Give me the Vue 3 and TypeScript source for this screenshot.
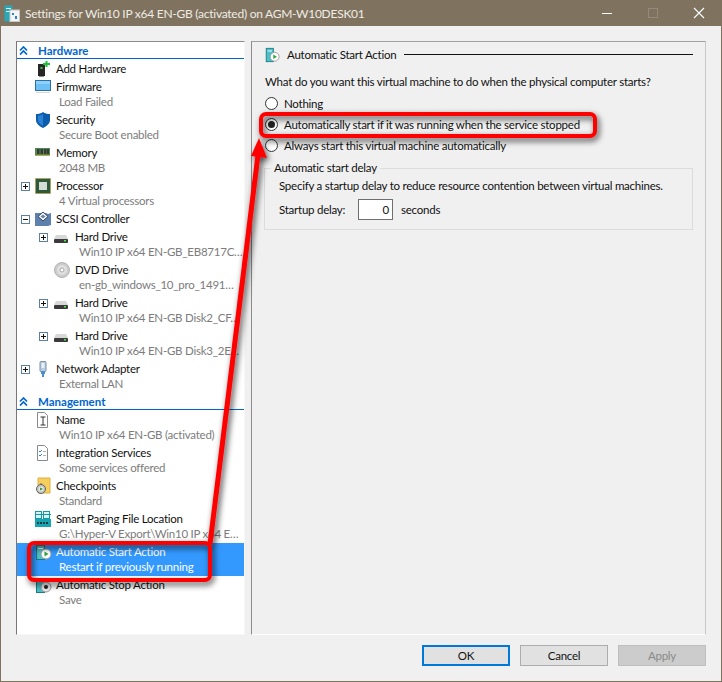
<script setup lang="ts">
interface Row {
  icon: string
  title: string
  sub?: string
  nested?: boolean
  toggle?: '+' | '−'
  selected?: boolean
}

const hardware: Row[] = [
  { icon: 'add', title: 'Add Hardware' },
  { icon: 'firmware', title: 'Firmware', sub: 'Load Failed' },
  { icon: 'security', title: 'Security', sub: 'Secure Boot enabled' },
  { icon: 'memory', title: 'Memory', sub: '2048 MB' },
  { icon: 'cpu', title: 'Processor', sub: '4 Virtual processors', toggle: '+' },
  { icon: 'scsi', title: 'SCSI Controller', toggle: '−' },
  { icon: 'disk', title: 'Hard Drive', sub: 'Win10 IP x64 EN-GB_EB8717C…', nested: true, toggle: '+' },
  { icon: 'dvd', title: 'DVD Drive', sub: 'en-gb_windows_10_pro_1491…', nested: true },
  { icon: 'disk', title: 'Hard Drive', sub: 'Win10 IP x64 EN-GB Disk2_CF…', nested: true, toggle: '+' },
  { icon: 'disk', title: 'Hard Drive', sub: 'Win10 IP x64 EN-GB Disk3_2E…', nested: true, toggle: '+' },
  { icon: 'net', title: 'Network Adapter', sub: 'External LAN', toggle: '+' },
]

const management: Row[] = [
  { icon: 'name', title: 'Name', sub: 'Win10 IP x64 EN-GB (activated)' },
  { icon: 'services', title: 'Integration Services', sub: 'Some services offered' },
  { icon: 'checkpoint', title: 'Checkpoints', sub: 'Standard' },
  { icon: 'paging', title: 'Smart Paging File Location', sub: 'G:\\Hyper-V Export\\Win10 IP x64 E…' },
  { icon: 'start', title: 'Automatic Start Action', sub: 'Restart if previously running', selected: true },
  { icon: 'stop', title: 'Automatic Stop Action', sub: 'Save' },
]

const sections = [
  { name: 'Hardware', rows: hardware },
  { name: 'Management', rows: management },
]

const choices = [
  { label: 'Nothing', checked: false },
  { label: 'Automatically start if it was running when the service stopped', checked: true },
  { label: 'Always start this virtual machine automatically', checked: false },
]
</script>

<template>
  <div class="screen">
    <div class="window">
      <header class="titlebar">
        <svg class="title-icon" width="16" height="17" viewBox="0 0 16 17">
          <rect x="0.5" y="0.5" width="8" height="16" fill="#2aa6b4" />
          <rect x="2" y="3" width="5" height="1" fill="#d8f0f2" />
          <rect x="2" y="6" width="5" height="1" fill="#d8f0f2" />
          <rect x="6" y="5" width="9.5" height="11.5" fill="#f4f4f4" stroke="#c8c8c8" />
          <rect x="8" y="8" width="2" height="2" fill="#2f7fd0" />
          <rect x="11" y="11" width="2" height="3" fill="#2f7fd0" />
        </svg>
        <span class="title-text">Settings for Win10 IP x64 EN-GB (activated) on AGM-W10DESK01</span>
        <div class="controls">
          <svg width="12" height="12" viewBox="0 0 12 12"><rect x="1" y="6" width="10" height="1" fill="#fff" /></svg>
          <svg width="12" height="12" viewBox="0 0 12 12"><rect x="1.5" y="1.5" width="9" height="9" fill="none" stroke="#94897a" /></svg>
          <svg width="12" height="12" viewBox="0 0 12 12"><path d="M1 1l10 10M11 1L1 11" stroke="#fff" stroke-width="1.1" fill="none" /></svg>
        </div>
      </header>

      <div class="body">
        <div class="main">
          <nav class="tree">
            <section v-for="section in sections" :key="section.name">
              <h2 class="section-head">
                <svg width="9" height="9" viewBox="0 0 9 9">
                  <path d="M1 4.5l3.5-3.5L8 4.5M1 8.5L4.5 5 8 8.5" fill="none" stroke="#0066cc" stroke-width="1.7" />
                </svg>
                <span>{{ section.name }}</span>
              </h2>
              <div
                v-for="(row, i) in section.rows"
                :key="i"
                class="row"
                :class="{ nested: row.nested, selected: row.selected, 'has-sub': row.sub }"
              >
                <span class="toggle-cell">
                  <span v-if="row.toggle" class="toggle">
                    <svg width="9" height="9" viewBox="0 0 9 9">
                      <rect x="0.5" y="0.5" width="8" height="8" fill="#fff" stroke="#5f7f9f" />
                      <rect x="2" y="4" width="5" height="1" fill="#111" />
                      <rect v-if="row.toggle === '+'" x="4" y="2" width="1" height="5" fill="#111" />
                    </svg>
                  </span>
                </span>
                <svg class="icon" width="18" height="18" viewBox="0 0 18 18">
                  <template v-if="row.icon === 'add'">
                    <path d="M4 4h7v12H4z" fill="#262626" />
                    <rect x="5" y="16" width="5" height="1" fill="#888" />
                    <rect x="6.500" y="7" width="2" height="2" fill="#3fc04a" />
                    <path d="M11.500 1h2v2h2.500v2h-2.500v2h-2V5H9V3h2.500z" fill="#1fbf3a" />
                  </template>
                  <template v-else-if="row.icon === 'firmware'">
                    <rect x="1.500" y="2.500" width="15" height="10" fill="#6cc0f4" stroke="#2a6fa8" />
                    <rect x="2" y="3" width="14" height="3" fill="#8ed2fa" />
                    <rect x="2" y="14" width="14" height="1" fill="#d8d8d8" />
                  </template>
                  <template v-else-if="row.icon === 'security'">
                    <path d="M9 1c2 1.500 4 2 7 2v6c0 3.500-3 6-7 8-4-2-7-4.500-7-8V3c3 0 5-.5 7-2z" fill="#0a5cad" />
                    <path d="M9 3c-1.500 1-3 1.500-5 1.700V9c0 2.500 2 4.300 5 6z" fill="#2a82d4" />
                  </template>
                  <template v-else-if="row.icon === 'memory'">
                    <rect x="1" y="4" width="15" height="8" fill="#4c8a55" />
                    <rect x="3" y="5" width="2.500" height="5" fill="#3a3a32" />
                    <rect x="6.500" y="5" width="2.500" height="5" fill="#3a3a32" />
                    <rect x="10" y="5" width="2.500" height="5" fill="#3a3a32" />
                    <rect x="13" y="5" width="2" height="5" fill="#3a3a32" />
                    <rect x="1" y="11" width="15" height="1" fill="#b9a64f" />
                  </template>
                  <template v-else-if="row.icon === 'cpu'">
                    <rect x="1.500" y="1.500" width="15" height="15" fill="#2f5a3a" stroke="#b89a3a" stroke-dasharray="1 1" />
                    <rect x="2.500" y="2.500" width="13" height="13" fill="#2f5a3a" />
                    <rect x="5" y="5" width="8" height="8" fill="#d4dcd6" />
                  </template>
                  <template v-else-if="row.icon === 'scsi'">
                    <path d="M1 3h11l2 1 3-1v12l-3 1H1z" fill="#5d80ad" />
                    <path d="M9 2l5 4.500L9 11 4 6.500z" fill="#f1f4f8" stroke="#30445f" />
                    <path d="M9 4.500L11.500 6.500 9 8.500 6.500 6.500z" fill="#6e86a6" />
                  </template>
                  <template v-else-if="row.icon === 'disk'">
                    <path d="M4 7h10l2 4H2z" fill="#d8d8d8" />
                    <rect x="2" y="11" width="14" height="4" rx="1" fill="#3a3a3a" />
                    <rect x="12" y="12" width="2" height="1.500" fill="#52e052" />
                  </template>
                  <template v-else-if="row.icon === 'dvd'">
                    <circle cx="10" cy="9" r="7.500" fill="#cbcbcb" stroke="#b4b4b4" />
                    <circle cx="10" cy="9" r="5" fill="#e0e0e0" />
                    <circle cx="10" cy="9" r="2" fill="#fff" stroke="#a8a8a8" />
                  </template>
                  <template v-else-if="row.icon === 'net'">
                    <rect x="6" y="1.500" width="6" height="10" rx="1" fill="#b9cde0" stroke="#7a8ea5" />
                    <rect x="7.500" y="3" width="3" height="5" fill="#e8f0f6" />
                    <rect x="7" y="11" width="4" height="3" fill="#4f8fc8" />
                    <rect x="8" y="14" width="2" height="3" fill="#4a90d9" />
                  </template>
                  <template v-else-if="row.icon === 'name'">
                    <path d="M3.500 1.500h7l3 3v12h-10z" fill="#fff" stroke="#8a8a8a" />
                    <path d="M6.500 6h5M6.500 14h5M9 6v8" fill="none" stroke="#333" />
                  </template>
                  <template v-else-if="row.icon === 'services'">
                    <path d="M3.500 1.500h7l3 3v12h-10z" fill="#fff" stroke="#8a8a8a" />
                    <path d="M5 7l1 1 2-2M5 11l1 1 2-2" fill="none" stroke="#2f7fd0" />
                    <path d="M9 7.500h3M9 11.500h3" stroke="#b0b0b0" />
                  </template>
                  <template v-else-if="row.icon === 'checkpoint'">
                    <path d="M4 1h8l4 0v15H4z" fill="#f4cf5f" stroke="#e0b040" />
                    <circle cx="7" cy="12" r="4.500" fill="#c4c4c4" stroke="#666" />
                    <circle cx="7" cy="12" r="2.500" fill="#e8e8e8" />
                    <path d="M6 10.500l3 1.500-3 1.500z" fill="#2f9a3a" />
                    <rect x="6" y="6.500" width="2" height="1" fill="#666" />
                  </template>
                  <template v-else-if="row.icon === 'paging'">
                    <rect x="1.500" y="1.500" width="6" height="7" fill="#d8f2f4" stroke="#129aa6" />
                    <rect x="9.500" y="1.500" width="6" height="7" fill="#d8f2f4" stroke="#129aa6" />
                    <rect x="1" y="4" width="16" height="1" fill="#129aa6" />
                    <rect x="1" y="9" width="16" height="8" fill="#15a4b0" />
                    <path d="M3 12h2v2H3zM6 12h2v2H6zM9 12h2v2H9zM12 12h2v2h-2z" fill="#063e46" />
                  </template>
                  <template v-else-if="row.icon === 'start'">
                    <rect x="2.500" y="2.500" width="8" height="14" fill="#4ec0c8" stroke="#1a7c86" />
                    <rect x="4" y="5" width="5" height="1" fill="#fff" />
                    <circle cx="12" cy="11" r="5" fill="#fff" stroke="#9a9a9a" />
                    <path d="M10.500 8.500l4 2.500-4 2.500z" fill="#2aa83a" />
                  </template>
                  <template v-else-if="row.icon === 'stop'">
                    <rect x="2.500" y="2.500" width="8" height="14" fill="#4ec0c8" stroke="#1a7c86" />
                    <rect x="4" y="5" width="5" height="1" fill="#fff" />
                    <circle cx="12" cy="11" r="5" fill="#eee" stroke="#9a9a9a" />
                    <circle cx="12" cy="11" r="2" fill="#222" />
                  </template>
                </svg>
                <span class="row-title">{{ row.title }}</span>
                <span v-if="row.sub" class="row-sub">{{ row.sub }}</span>
              </div>
            </section>
          </nav>

          <section class="panel">
            <div class="panel-head">
              <svg width="16" height="16" viewBox="0 0 18 18">
                <rect x="2.500" y="1.500" width="8" height="15" fill="#4ec0c8" stroke="#1a7c86" />
                <rect x="4" y="4" width="5" height="1" fill="#fff" />
                <circle cx="12" cy="11" r="5" fill="#fff" stroke="#9a9a9a" />
                <path d="M10.500 8.500l4 2.500-4 2.500z" fill="#2aa83a" />
              </svg>
              <span class="panel-title">Automatic Start Action</span>
              <span class="panel-rule"></span>
            </div>
            <p class="question">What do you want this virtual machine to do when the physical computer starts?</p>
            <div class="choices">
              <label v-for="choice in choices" :key="choice.label" class="choice">
                <span class="radio" :class="{ checked: choice.checked }"></span>
                <span>{{ choice.label }}</span>
              </label>
            </div>
            <fieldset class="delay">
              <legend>Automatic start delay</legend>
              <p class="delay-text">Specify a startup delay to reduce resource contention between virtual machines.</p>
              <div class="delay-row">
                <span>Startup delay:</span>
                <span class="delay-input">0</span>
                <span>seconds</span>
              </div>
            </fieldset>
          </section>
        </div>

        <footer class="footer">
          <button class="btn primary" type="button">OK</button>
          <button class="btn" type="button">Cancel</button>
          <button class="btn disabled" type="button">Apply</button>
        </footer>
      </div>
    </div>

    <svg class="annotations" width="722" height="682" viewBox="0 0 722 682">
      <defs>
        <filter id="shade" x="-20%" y="-20%" width="140%" height="140%">
          <feDropShadow dx="2" dy="3" stdDeviation="3" flood-color="#000" flood-opacity="0.75" />
        </filter>
      </defs>
      <g filter="url(#shade)" fill="none" stroke="#ff0000">
        <rect x="29" y="543" width="181" height="37" rx="5" stroke-width="4" />
        <rect x="261" y="114" width="334" height="22" rx="5" stroke-width="4" />
        <path d="M210 544L258 155" stroke-width="5" />
        <path d="M259 138L267 158 251 156z" fill="#ff0000" stroke="none" />
      </g>
    </svg>
  </div>
</template>

<style>
html,
body {
  margin: 0;
  background: #f0f0f0;
}
</style>

<style scoped>
.screen {
  position: relative;
  width: 722px;
  height: 682px;
  overflow: hidden;
  font-family: Lato, "Open Sans", sans-serif;
  font-size: 11.5px;
  letter-spacing: -0.24px;
  color: #111;
}
.window {
  box-sizing: border-box;
  height: 682px;
  display: flex;
  flex-direction: column;
  background: #f0f0f0;
  border: 1px solid #7f7360;
  border-top: 0;
}
.titlebar {
  flex: none;
  height: 26px;
  display: flex;
  align-items: center;
  background: #7f7360;
  color: #f0ece4;
  padding-left: 4px;
  margin: 0 -1px;
}
.title-icon {
  flex: none;
}
.title-text {
  margin-left: 5px;
  font-size: 12px;
  letter-spacing: -0.26px;
  white-space: nowrap;
}
.controls {
  margin-left: auto;
  display: flex;
  gap: 34px;
  padding-right: 17px;
}
.body {
  flex: 1;
  display: flex;
  flex-direction: column;
  padding: 15px 15px 0;
  min-height: 0;
}
.main {
  display: flex;
  gap: 6px;
  height: 594px;
}
.tree {
  box-sizing: border-box;
  width: 229px;
  flex: none;
  background: #fff;
  border: 1px solid;
  border-color: #8c8c8c #f7f7f7 #f7f7f7 #777;
  overflow: hidden;
}
.section-head {
  box-sizing: border-box;
  height: 17px;
  margin: 0 0 1px;
  display: flex;
  align-items: center;
  gap: 10px;
  padding-left: 2px;
  border-bottom: 1px solid #0066cc;
  font-size: 11.5px;
  font-weight: 700;
  letter-spacing: 0;
  color: #0066cc;
}
.row {
  display: grid;
  grid-template-columns: 9px 18px 1fr;
  grid-template-rows: 18px;
  column-gap: 4px;
  padding-left: 4px;
  line-height: 18px;
  white-space: nowrap;
}
.row.has-sub {
  grid-template-rows: 18px 15px;
}
.row.nested {
  padding-left: 22px;
}
.row.nested .row-title {
  margin-left: 1px;
}
.row.nested .row-sub {
  padding-left: 5px;
}
.toggle-cell {
  grid-row: 1;
  display: flex;
  align-items: center;
}
.toggle {
  display: flex;
}
.icon {
  grid-row: 1 / span 2;
  grid-column: 2;
}
.row-title {
  grid-row: 1;
  grid-column: 3;
}
.row-sub {
  grid-row: 2;
  grid-column: 3;
  padding-left: 3px;
  line-height: 11px;
  color: #7c7c7c;
}
.row.selected {
  background: #3399ff;
}
.row.selected .row-title,
.row.selected .row-sub {
  color: #fff;
}
.panel {
  flex: 1;
  box-sizing: border-box;
  border: 1px solid;
  border-color: #a0a0a0 #c8c8c8 #fff #8c8c8c;
  padding: 5px 12px 0 13px;
  min-width: 0;
}
.panel-head {
  display: flex;
  align-items: center;
  height: 16px;
  margin-left: -1px;
}
.panel-title {
  margin: 0 0 2px 7px;
  white-space: nowrap;
}
.panel-rule {
  flex: 1;
  height: 1px;
  margin: 0 0 1px 8px;
  background: #111;
}
.question {
  margin: 10px 0 0;
  line-height: 18px;
  white-space: nowrap;
}
.choices {
  margin-top: 2px;
}
.choice {
  display: flex;
  align-items: center;
  gap: 6px;
  height: 21px;
  white-space: nowrap;
}
.radio {
  box-sizing: border-box;
  width: 13px;
  height: 13px;
  border-radius: 50%;
  border: 1px solid #333;
  background: #fff;
  display: flex;
  align-items: center;
  justify-content: center;
}
.radio.checked::after {
  content: "";
  width: 7px;
  height: 7px;
  border-radius: 50%;
  background: #222;
}
.delay {
  box-sizing: border-box;
  margin: 4px 0 0 -1px;
  height: 70px;
  min-width: 0;
  padding: 1px 0 0 14px;
  border: 1px solid #dcdcdc;
}
.delay legend {
  padding: 0 3px;
  margin-left: -8px;
  line-height: 16px;
}
.delay-text {
  margin: 0;
  line-height: 18px;
  white-space: nowrap;
}
.delay-row {
  display: flex;
  align-items: center;
  margin-top: 4px;
}
.delay-input {
  box-sizing: border-box;
  width: 35px;
  height: 21px;
  margin: 0 8px 0 0;
  border: 1px solid #6f6f6f;
  background: #fff;
  line-height: 19px;
  text-align: right;
  padding-right: 3px;
}
.delay-row span:first-child {
  width: 79px;
  flex: none;
}
.footer {
  display: flex;
  justify-content: flex-end;
  gap: 10px;
  margin-top: 10px;
}
.btn {
  box-sizing: border-box;
  width: 88px;
  height: 21px;
  padding: 0;
  background: #e1e1e1;
  border: 1px solid #adadad;
  font: inherit;
  letter-spacing: inherit;
  color: #111;
}
.btn.primary {
  border: 2px solid #0078d7;
}
.btn.disabled {
  background: #cccccc;
  border-color: #bfbfbf;
  color: #8a8a8a;
}
.annotations {
  position: absolute;
  top: 0;
  left: 0;
  pointer-events: none;
}
</style>
